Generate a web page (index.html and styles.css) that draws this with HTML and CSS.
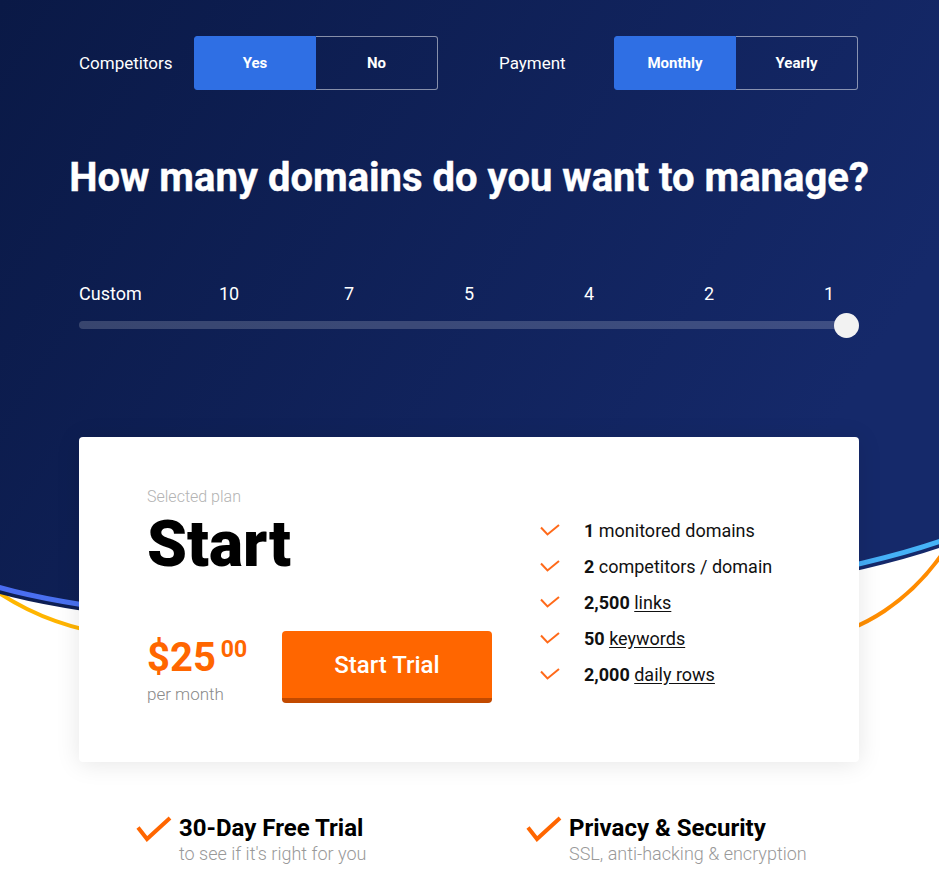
FILE: index.html
```html
<!DOCTYPE html>
<html lang="en">
	<head>
		<meta charset="UTF-8" />
		<meta name="viewport" content="width=device-width, initial-scale=1.0" />
		<title>Pricing</title>
		<link rel="stylesheet" href="styles.css">
	</head>
	<body>
		<div class="page">
			<!-- decorative hero background with the curved bottom edge -->
			<svg class="backdrop" width="939" height="660" viewBox="0 0 939 660">
				<defs>
					<linearGradient id="hero-bg" x1="0" y1="0" x2="1" y2="0.4">
						<stop offset="0" stop-color="#0a1946" />
						<stop offset="1" stop-color="#15296a" />
					</linearGradient>
					<linearGradient id="blue-line" x1="0" y1="0" x2="1" y2="0">
						<stop offset="0" stop-color="#4a6cf0" />
						<stop offset="1" stop-color="#45b4f7" />
					</linearGradient>
					<linearGradient id="gold-line" x1="0" y1="0" x2="1" y2="0">
						<stop offset="0" stop-color="#ffb700" />
						<stop offset="1" stop-color="#ff8a00" />
					</linearGradient>
				</defs>
				<path d="M-4 591 C30 614 70 630 120 636 L820 636 C860 632 910 602 945 550" fill="none" stroke="url(#gold-line)" stroke-width="4" />
				<path d="M0 0 H939 V548 Q860 575 700 600 Q450 638 150 620 Q50 608 0 594 Z" fill="url(#hero-bg)" />
				<path d="M-2 587 Q50 602 150 614 Q450 632 700 594 Q860 569 941 541" fill="none" stroke="url(#blue-line)" stroke-width="5" />
			</svg>

			<main class="wrap">
				<section class="filters">
					<div class="filter">
						<span class="filter-label">Competitors</span>
						<div class="toggle">
							<button class="toggle-btn active">Yes</button>
							<button class="toggle-btn">No</button>
						</div>
					</div>
					<div class="filter">
						<span class="filter-label">Payment</span>
						<div class="toggle">
							<button class="toggle-btn active">Monthly</button>
							<button class="toggle-btn">Yearly</button>
						</div>
					</div>
				</section>

				<h1 class="title">How many domains do you want to manage?</h1>

				<div class="slider">
					<div class="slider-labels">
						<span class="first">Custom</span>
						<span>10</span>
						<span>7</span>
						<span>5</span>
						<span>4</span>
						<span>2</span>
						<span>1</span>
					</div>
					<div class="slider-track">
						<span class="slider-thumb"></span>
					</div>
				</div>

				<div class="plan-card">
					<div class="plan-main">
						<div class="plan-label">Selected plan</div>
						<div class="plan-name">Start</div>
						<div class="plan-buy">
							<div class="price">
								<div class="price-amount">$25<sup>00</sup></div>
								<div class="price-period">per month</div>
							</div>
							<button class="trial-btn">Start Trial</button>
						</div>
					</div>
					<ul class="plan-list">
						<li><svg class="tick" viewBox="0 0 20 12"><polyline points="1,3.5 7.5,10.5 19,1" /></svg><span><b>1</b> monitored domains</span></li>
						<li><svg class="tick" viewBox="0 0 20 12"><polyline points="1,3.5 7.5,10.5 19,1" /></svg><span><b>2</b> competitors / domain</span></li>
						<li><svg class="tick" viewBox="0 0 20 12"><polyline points="1,3.5 7.5,10.5 19,1" /></svg><span><b>2,500</b> <u>links</u></span></li>
						<li><svg class="tick" viewBox="0 0 20 12"><polyline points="1,3.5 7.5,10.5 19,1" /></svg><span><b>50</b> <u>keywords</u></span></li>
						<li><svg class="tick" viewBox="0 0 20 12"><polyline points="1,3.5 7.5,10.5 19,1" /></svg><span><b>2,000</b> <u>daily rows</u></span></li>
					</ul>
				</div>

				<section class="features">
					<div class="feature">
						<svg class="feature-tick" viewBox="0 0 36 26"><polyline points="2,11.5 11,23 34,2" /></svg>
						<div>
							<div class="feature-title">30-Day Free Trial</div>
							<div class="feature-text">to see if it's right for you</div>
						</div>
					</div>
					<div class="feature">
						<svg class="feature-tick" viewBox="0 0 36 26"><polyline points="2,11.5 11,23 34,2" /></svg>
						<div>
							<div class="feature-title">Privacy &amp; Security</div>
							<div class="feature-text">SSL, anti-hacking &amp; encryption</div>
						</div>
					</div>
				</section>
			</main>
		</div>
	</body>
</html>
```

FILE: styles.css
```css
body {
	margin: 0;
	font-family: Roboto, "Liberation Sans", Arial, sans-serif;
	background-color: #fff;
	color: #111;
}

.page {
	position: relative;
	min-height: 883px;
	padding: 0 80px 0 79px;
	overflow: hidden;
}

.backdrop {
	position: absolute;
	top: 0;
	left: 0;
	z-index: 0;
}

.wrap {
	position: relative;
	z-index: 1;
	padding-top: 36px;
}

/* filters row */
.filters {
	display: flex;
	justify-content: space-between;
	padding-right: 1px;
}

.filter {
	display: flex;
	align-items: center;
}

.filter-label {
	width: 115px;
	font-size: 17px;
	color: #fff;
}

.toggle {
	display: flex;
}

.toggle-btn {
	width: 122px;
	height: 54px;
	font-family: inherit;
	font-size: 15px;
	font-weight: bold;
	color: #fff;
	background: transparent;
	border: 1px solid rgba(255, 255, 255, 0.5);
	border-left: none;
	border-radius: 0 3px 3px 0;
	cursor: pointer;
}

.toggle-btn.active {
	background-color: #2f6fe4;
	border: 1px solid #2f6fe4;
	border-radius: 3px 0 0 3px;
}

.title {
	margin: 64px -20px 0;
	font-size: 40px;
	line-height: 48px;
	font-weight: bold;
	color: #fff;
	text-align: center;
	white-space: nowrap;
	-webkit-text-stroke: 0.4px #fff;
}

/* domains slider */
.slider {
	margin-top: 81px;
}

.slider-labels {
	display: grid;
	grid-template-columns: 90px repeat(6, 120px);
	justify-items: center;
	font-size: 18px;
	line-height: 22px;
	color: #fff;
}

.slider-labels .first {
	justify-self: start;
}

.slider-track {
	position: relative;
	height: 8px;
	margin: 16px 4px 0 0;
	border-radius: 4px;
	background-color: rgba(255, 255, 255, 0.18);
}

.slider-thumb {
	position: absolute;
	right: -4px;
	top: -8px;
	width: 25px;
	height: 25px;
	border-radius: 50%;
	background-color: #f2f2f2;
}

/* plan card */
.plan-card {
	display: grid;
	grid-template-columns: 393px 1fr;
	margin-top: 108px;
	padding: 50px 68px 58px;
	background-color: #fff;
	border-radius: 4px;
	box-shadow: 0 2px 24px rgba(0, 0, 0, 0.1);
}

.plan-label {
	font-size: 16px;
	line-height: 20px;
	font-weight: 300;
	color: #b3b3b3;
}

.plan-name {
	margin-top: 6px;
	font-size: 64px;
	line-height: 64px;
	font-weight: 900;
	color: #000;
}

.plan-buy {
	display: flex;
	align-items: flex-start;
	margin-top: 54px;
}

.price {
	width: 135px;
	padding-top: 5px;
}

.price-amount {
	font-size: 40px;
	line-height: 44px;
	font-weight: bold;
	color: #ff6600;
}

.price-amount sup {
	margin-left: 5px;
	font-size: 23px;
	vertical-align: 14px;
	line-height: 0;
}

.price-period {
	margin-top: 4px;
	font-size: 17px;
	font-weight: 300;
	color: #8a8a8a;
}

.trial-btn {
	width: 210px;
	height: 72px;
	font-family: inherit;
	font-size: 24px;
	font-weight: 500;
	color: #fff;
	background-color: #ff6600;
	border: none;
	border-bottom: 5px solid #c24a00;
	border-radius: 4px;
	cursor: pointer;
}

.plan-list {
	list-style: none;
	margin: 25px 0 0;
	padding: 0;
}

.plan-list li {
	display: flex;
	align-items: center;
	height: 36px;
	font-size: 18px;
	color: #111;
}

.plan-list u {
	text-underline-offset: 2px;
}

.tick {
	width: 20px;
	height: 12px;
	margin-right: 24px;
	fill: none;
	stroke: #ff6a1a;
	stroke-width: 2;
}

/* features under the card */
.features {
	display: grid;
	grid-template-columns: 1fr 1fr;
	margin-top: 52px;
}

.feature {
	display: flex;
	align-items: flex-start;
	padding-left: 57px;
}

.feature-tick {
	width: 36px;
	height: 26px;
	margin: 2px 7px 0 0;
	fill: none;
	stroke: #ff6600;
	stroke-width: 4;
}

.feature-title {
	font-size: 24px;
	line-height: 28px;
	font-weight: bold;
	color: #000;
}

.feature-text {
	margin-top: 2px;
	font-size: 18px;
	line-height: 20px;
	font-weight: 300;
	color: #999;
}
```
